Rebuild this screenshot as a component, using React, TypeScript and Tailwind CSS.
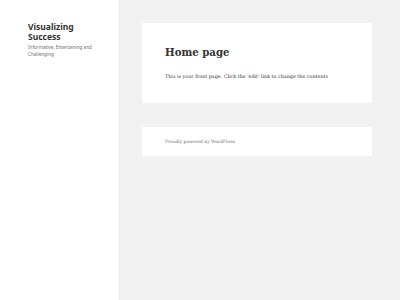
export default function App() {
  return (
    <div className="flex w-[400px] h-[300px] bg-[#f1f1f1] overflow-hidden">
      {/* Sidebar */}
      <aside className="w-[119px] h-full bg-white shadow-[0_0_1px_rgba(0,0,0,0.15)] pt-[22px] pl-[28px] pr-[20px] font-['Noto_Sans',sans-serif]">
        <h1 className="text-[8.5px] leading-[9.5px] font-bold text-[#333]">
          Visualizing
          <br />
          Success
        </h1>
        <p className="mt-[3px] text-[4.6px] leading-[6.5px] text-[#707070]">
          Informative, Entertaining and
          <br />
          Challenging
        </p>
      </aside>

      {/* Main */}
      <main className="flex-1 pt-[23px] pl-[23px] pr-[28px] font-['DejaVu_Serif',serif]">
        <article className="h-[80px] bg-white pt-[21px] pl-[23px]">
          <h2 className="text-[10.2px] leading-[16px] font-bold text-[#333]">
            Home page
          </h2>
          <p className="mt-[12px] text-[4.85px] leading-[8px] text-[#333]">
            This is your front page. Click the 'edit' link to change the contents
          </p>
        </article>

        <footer className="mt-[24px] h-[29px] bg-white pl-[23px] pt-[12px]">
          <p className="text-[4.4px] leading-[6px] text-[#707070]">
            Proudly powered by WordPress
          </p>
        </footer>
      </main>
    </div>
  );
}
